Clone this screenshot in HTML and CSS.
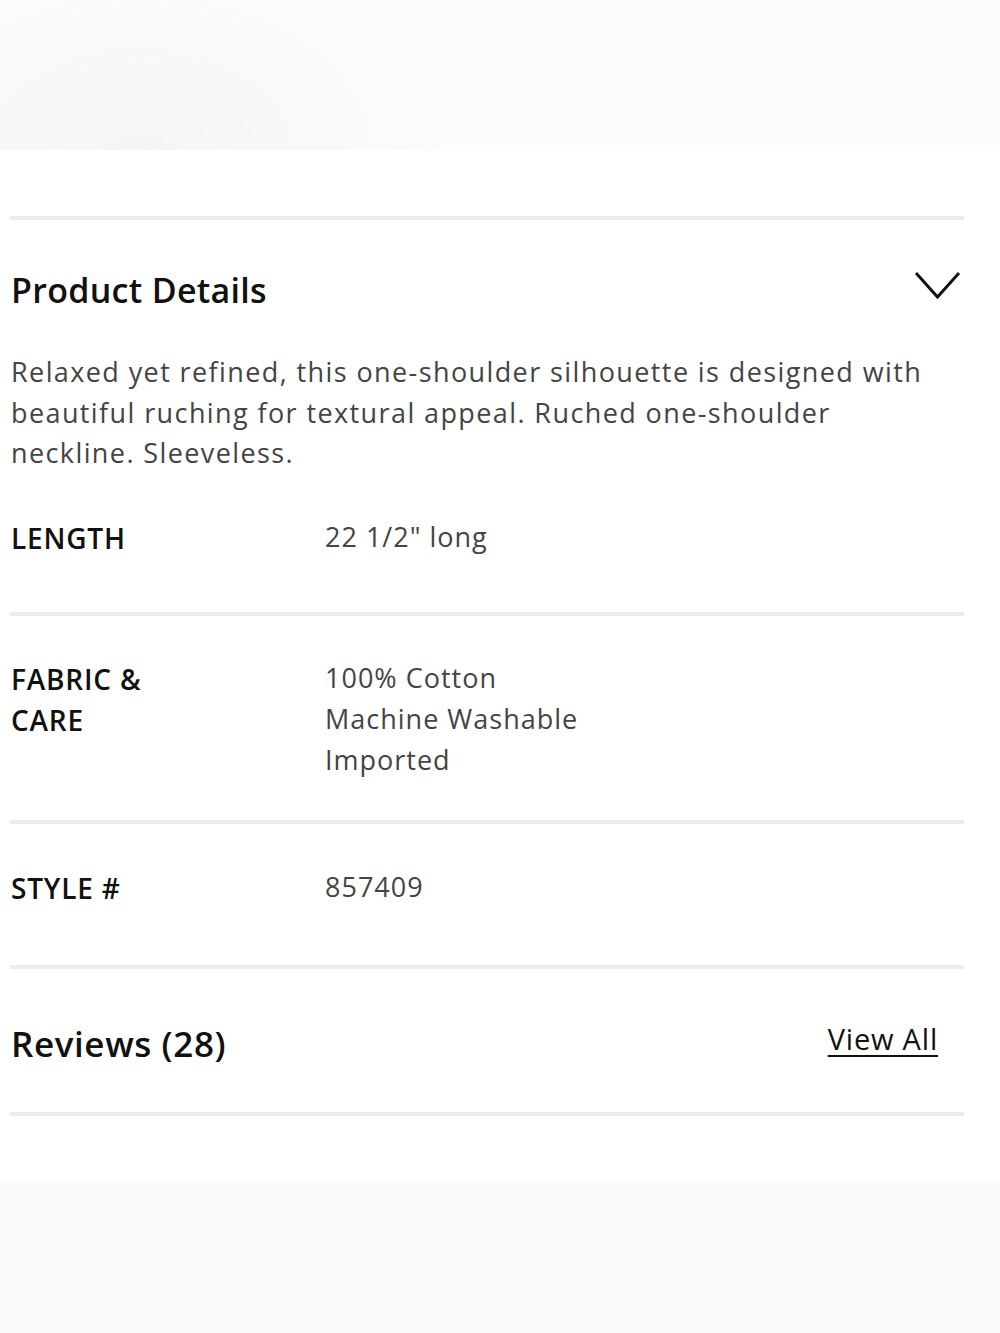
FILE: index.html
```html
<!DOCTYPE html>
<html lang="en">
<head>
<meta charset="utf-8">
<title>Product Details</title>
<link rel="stylesheet" href="styles.css">
</head>
<body>
<div class="hero"></div>
<main class="content">
  <div class="divider divider-top"></div>
  <section class="details">
    <div class="details-head">
      <h2 class="title">Product Details</h2>
      <svg class="chevron" width="48" height="30" viewBox="0 0 48 30" aria-hidden="true">
        <polyline points="2,2 23.5,26 45,2" fill="none" stroke="#111" stroke-width="3"/>
      </svg>
    </div>
    <p class="desc">Relaxed yet refined, this one-shoulder silhouette is designed with beautiful ruching for textural appeal. Ruched one-shoulder neckline. Sleeveless.</p>
    <div class="spec spec-first">
      <div class="spec-label">LENGTH</div>
      <div class="spec-value">22 1/2" long</div>
    </div>
  </section>
  <div class="divider"></div>
  <div class="spec spec-fabric">
    <div class="spec-label">FABRIC &amp;<br>CARE</div>
    <div class="spec-value">100% Cotton<br>Machine Washable<br>Imported</div>
  </div>
  <div class="divider"></div>
  <div class="spec spec-style">
    <div class="spec-label">STYLE #</div>
    <div class="spec-value">857409</div>
  </div>
  <div class="divider"></div>
  <div class="reviews">
    <h2 class="title">Reviews (28)</h2>
    <a class="view-all" href="#">View All</a>
  </div>
  <div class="divider"></div>
</main>
<div class="footer-fade"></div>
</body>
</html>
```
FILE: styles.css
```css
html, body {
  margin: 0;
  padding: 0;
  background: #fff;
}
body {
  font-family: "Open Sans", Lato, sans-serif;
  color: #111;
  width: 1000px;
  min-height: 1333px;
  display: flex;
  flex-direction: column;
}
.hero {
  height: 150px;
  background: radial-gradient(ellipse 300px 200px at 140px 150px, #f5f5f5, #fafafa 70%, #fcfcfc);
}
.content {
  padding: 0 36px 0 10px;
}
.divider {
  height: 4px;
  background: #ececec;
}
.divider-top {
  margin-top: 66px;
}
.details-head {
  display: flex;
  justify-content: space-between;
  align-items: center;
  padding: 50px 2px 0 1px;
}
.title {
  margin: 0;
  font-size: 34px;
  font-weight: 600;
  line-height: 40px;
  color: #111;
  letter-spacing: 0.3px;
}
.chevron {
  display: block;
  margin-top: -8px;
}
.desc {
  margin: 42px 0 0 1px;
  font-size: 27px;
  line-height: 40.5px;
  color: #444;
  letter-spacing: 1.4px;
  max-width: 935px;
}
.spec {
  display: flex;
  padding: 46px 0 58px 1px;
}
.spec-first {
  padding: 44px 0 53px 1px;
}
.spec-fabric {
  padding: 43px 0 40px 1px;
}
.spec-style {
  padding: 44px 0 56px 1px;
}
.spec-label {
  width: 314px;
  flex: none;
  font-size: 28px;
  font-weight: 600;
  line-height: 41px;
  color: #111;
  letter-spacing: 0.8px;
}
.spec-value {
  font-size: 27px;
  line-height: 41px;
  color: #444;
  margin-top: -2px;
  letter-spacing: 1px;
}
.reviews {
  display: flex;
  justify-content: space-between;
  align-items: center;
  padding: 55px 26px 48px 1px;
}
.reviews .title {
  font-size: 35px;
  letter-spacing: 0.6px;
}
.view-all {
  color: #111;
  font-size: 29px;
  letter-spacing: 0.8px;
  text-decoration: underline;
  text-decoration-thickness: 2px;
  text-underline-offset: 5px;
  margin-top: -10px;
}
.footer-fade {
  margin-top: 65px;
  flex: 1;
  background: #fafafa;
}
```
